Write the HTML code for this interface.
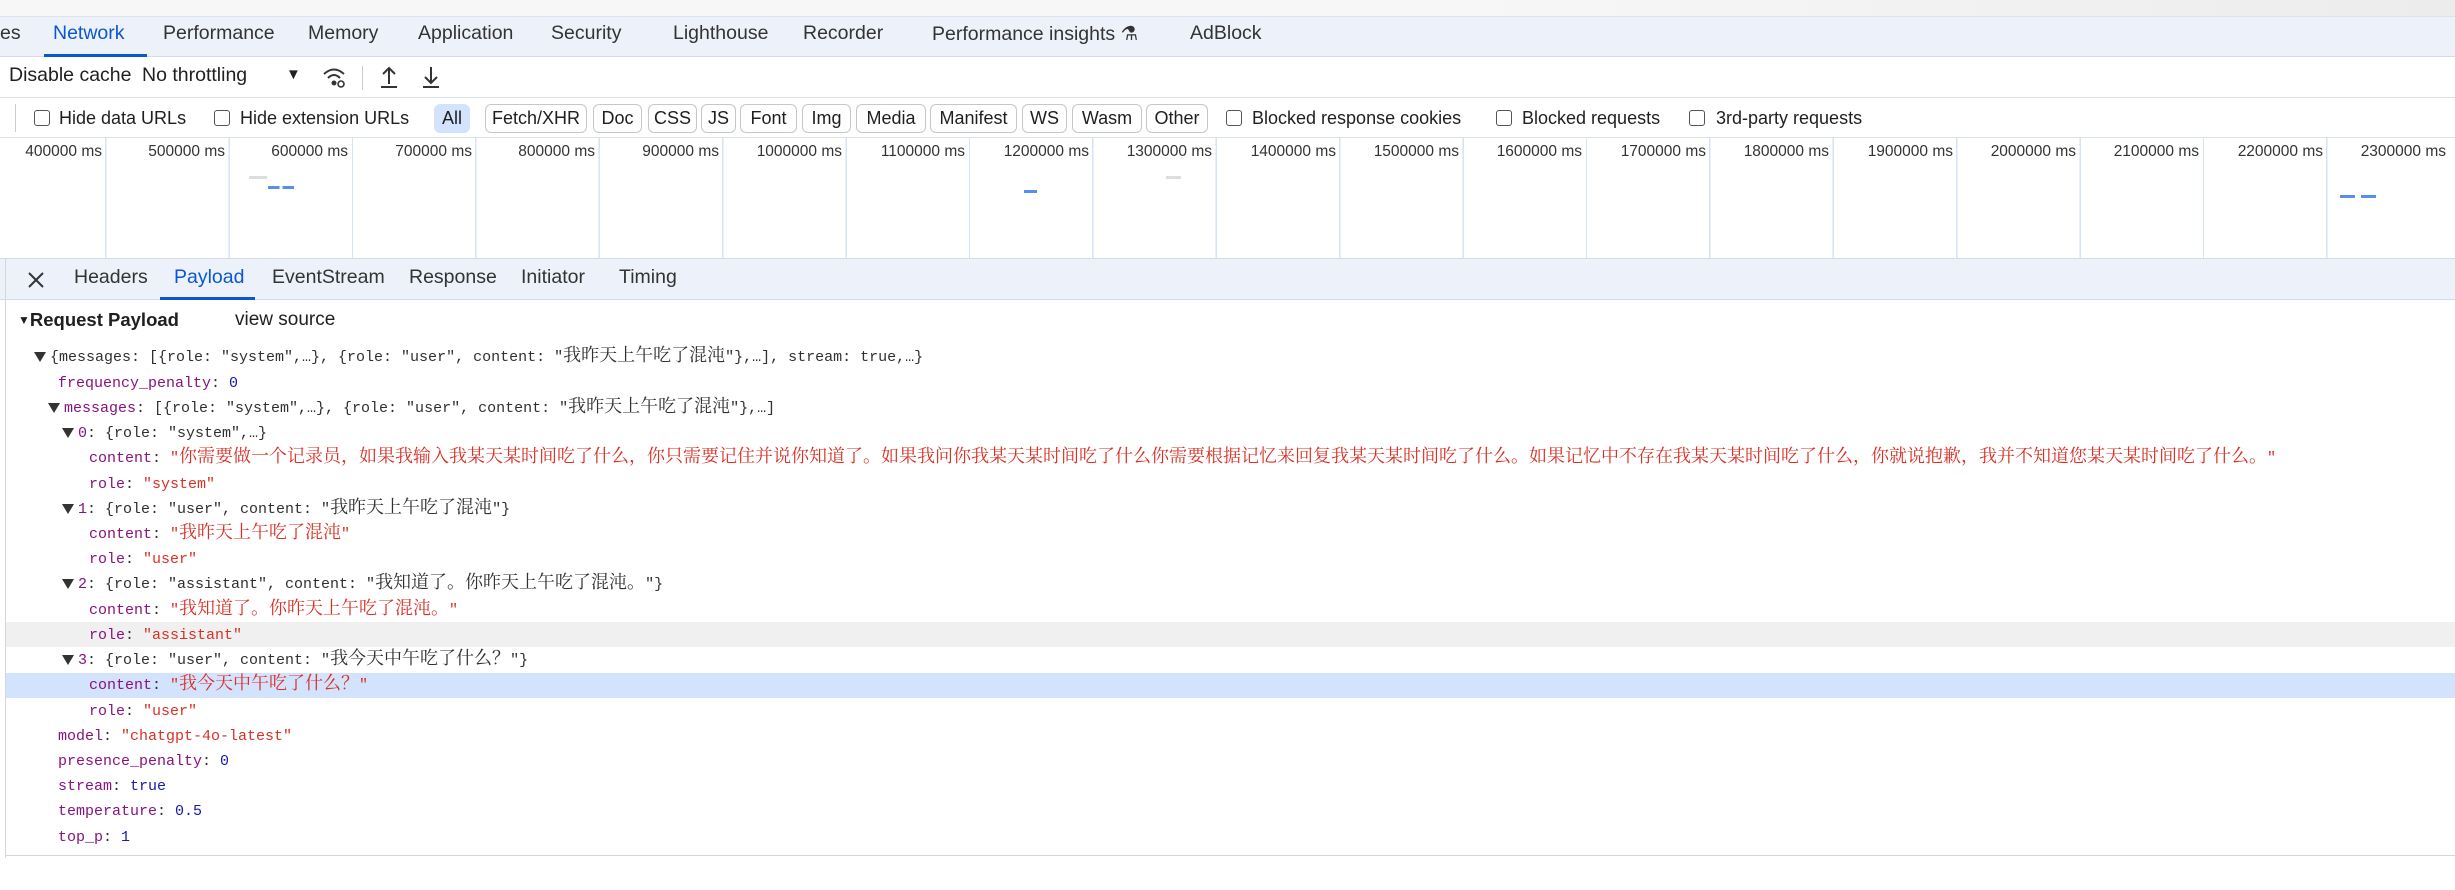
<!DOCTYPE html>
<html><head><meta charset="utf-8"><style>
*{margin:0;padding:0;box-sizing:border-box}
body{width:2455px;height:890px;overflow:hidden;background:#fff;font-family:"Liberation Sans","Noto Sans CJK SC",sans-serif;color:#1f1f1f;position:relative}
.a{position:absolute;white-space:nowrap}
.tab{position:absolute;top:22px;font-size:19.5px;color:#333}
.f{position:absolute;top:104px;font-size:18px;color:#1f1f1f;line-height:28px}
.pill{position:absolute;top:104px;height:29px;border:1px solid #c7c7c7;border-radius:6px;font-size:18px;line-height:27px;text-align:center;color:#1f1f1f}
.cb{position:absolute;top:110px;width:16px;height:16px;border:1.5px solid #555;border-radius:3px}
.tl{position:absolute;top:143px;font-size:15.5px;color:#333;text-align:right;width:115px}
.dt{position:absolute;top:266px;font-size:19.5px;color:#333}
.r{position:absolute;font-family:"Liberation Mono",monospace;font-size:15px;line-height:25px;height:25px;white-space:nowrap;color:#303030}
.r i{font-style:normal;font-family:"Noto Serif CJK SC","Noto Sans CJK SC",serif;font-size:18px;line-height:15px}
.k{color:#881280}.s{color:#d93025}.n{color:#1a1aa6}
.tri{display:inline-block;width:0;height:0;border-left:6px solid transparent;border-right:6px solid transparent;border-top:10px solid #333;margin-right:4px;vertical-align:-1px}
</style></head><body>
<div class="a" style="left:0;top:0;width:2455px;height:16px;background:linear-gradient(90deg,#f7f7f7 60%,#ececec 100%)"></div>
<div class="a" style="left:0;top:16px;width:2455px;height:41px;background:#edf2fa;border-top:1px solid #dde3ee;border-bottom:1px solid #d3dbe8"></div>
<div class="tab" style="left:0">es</div>
<div class="tab" style="left:53px;color:#0b57d0">Network</div>
<div class="a" style="left:44px;top:54px;width:103px;height:3px;background:#0b57d0"></div>
<div class="tab" style="left:163px">Performance</div>
<div class="tab" style="left:308px">Memory</div>
<div class="tab" style="left:418px">Application</div>
<div class="tab" style="left:551px">Security</div>
<div class="tab" style="left:673px">Lighthouse</div>
<div class="tab" style="left:803px">Recorder</div>
<div class="tab" style="left:932px">Performance insights ⚗</div>
<div class="tab" style="left:1190px">AdBlock</div>

<div class="a" style="left:0;top:97px;width:2455px;height:1px;background:#dde3ee"></div>
<div class="a" style="left:9px;top:64px;font-size:19.5px">Disable cache</div>
<div class="a" style="left:142px;top:64px;font-size:19.5px">No throttling</div>
<div class="a" style="left:286px;top:66px;font-size:15px">▼</div>
<svg class="a" style="left:322px;top:66px" width="26" height="24" viewBox="0 0 26 24" fill="none" stroke="#333" stroke-width="2"><path d="M2 8 Q12 -1 22 8"/><path d="M6 12 Q12 6 18 12"/><circle cx="12" cy="17" r="1.5" fill="#333"/><circle cx="19" cy="18" r="3" stroke-width="1.6"/></svg>
<div class="a" style="left:362px;top:66px;width:1px;height:24px;background:#ccc"></div>
<svg class="a" style="left:378px;top:64px" width="22" height="26" viewBox="0 0 22 26" fill="none" stroke="#333" stroke-width="2"><path d="M11 20V4M5 10l6-6 6 6M3 23h16"/></svg>
<svg class="a" style="left:420px;top:64px" width="22" height="26" viewBox="0 0 22 26" fill="none" stroke="#333" stroke-width="2"><path d="M11 3v16M5 13l6 6 6-6M3 23h16"/></svg>

<div class="a" style="left:0;top:137px;width:2455px;height:1px;background:#dde3ee"></div>
<div class="a" style="left:15px;top:104px;width:1px;height:28px;background:#ccc"></div>
<div class="cb" style="left:34px"></div><div class="f" style="left:59px">Hide data URLs</div>
<div class="cb" style="left:214px"></div><div class="f" style="left:240px">Hide extension URLs</div>
<div class="pill" style="left:434px;width:36px;background:#d3e3fd;border-color:#d3e3fd">All</div>
<div class="pill" style="left:485px;width:102px">Fetch/XHR</div>
<div class="pill" style="left:593px;width:49px">Doc</div>
<div class="pill" style="left:648px;width:49px">CSS</div>
<div class="pill" style="left:701px;width:35px">JS</div>
<div class="pill" style="left:740px;width:57px">Font</div>
<div class="pill" style="left:802px;width:49px">Img</div>
<div class="pill" style="left:856px;width:70px">Media</div>
<div class="pill" style="left:930px;width:87px">Manifest</div>
<div class="pill" style="left:1022px;width:45px">WS</div>
<div class="pill" style="left:1072px;width:70px">Wasm</div>
<div class="pill" style="left:1146px;width:62px">Other</div>
<div class="cb" style="left:1226px"></div><div class="f" style="left:1252px">Blocked response cookies</div>
<div class="cb" style="left:1496px"></div><div class="f" style="left:1522px">Blocked requests</div>
<div class="cb" style="left:1689px"></div><div class="f" style="left:1716px">3rd-party requests</div>

<div class="a" style="left:0;top:138px;width:2455px;height:120px;background:repeating-linear-gradient(90deg,transparent 0,transparent 122px,#d6e2f5 122px,#d6e2f5 123.4px);background-position:-17px 0"></div>
<div class="tl" style="left:-13px">400000 ms</div>
<div class="tl" style="left:110px">500000 ms</div>
<div class="tl" style="left:233px">600000 ms</div>
<div class="tl" style="left:357px">700000 ms</div>
<div class="tl" style="left:480px">800000 ms</div>
<div class="tl" style="left:604px">900000 ms</div>
<div class="tl" style="left:727px">1000000 ms</div>
<div class="tl" style="left:850px">1100000 ms</div>
<div class="tl" style="left:974px">1200000 ms</div>
<div class="tl" style="left:1097px">1300000 ms</div>
<div class="tl" style="left:1221px">1400000 ms</div>
<div class="tl" style="left:1344px">1500000 ms</div>
<div class="tl" style="left:1467px">1600000 ms</div>
<div class="tl" style="left:1591px">1700000 ms</div>
<div class="tl" style="left:1714px">1800000 ms</div>
<div class="tl" style="left:1838px">1900000 ms</div>
<div class="tl" style="left:1961px">2000000 ms</div>
<div class="tl" style="left:2084px">2100000 ms</div>
<div class="tl" style="left:2208px">2200000 ms</div>
<div class="tl" style="left:2331px">2300000 ms</div>
<div class="a" style="left:249px;top:176px;width:18px;height:3px;background:#ddd"></div>
<div class="a" style="left:268px;top:186px;width:26px;height:3px;background:linear-gradient(90deg,#5b8def 45%,transparent 45%,transparent 55%,#5b8def 55%)"></div>
<div class="a" style="left:1024px;top:190px;width:13px;height:3px;background:#5b8def"></div>
<div class="a" style="left:1166px;top:176px;width:15px;height:3px;background:#ddd"></div>
<div class="a" style="left:2340px;top:195px;width:36px;height:3px;background:linear-gradient(90deg,#5b8def 42%,transparent 42%,transparent 58%,#5b8def 58%)"></div>

<div class="a" style="left:0;top:258px;width:2455px;height:42px;background:#edf2fa;border-top:1px solid #d3dbe8;border-bottom:1px solid #d3dbe8"></div>
<div class="a" style="left:5px;top:258px;width:1px;height:600px;background:#d6d6d6"></div>
<svg class="a" style="left:27px;top:271px" width="18" height="18" viewBox="0 0 18 18" stroke="#333" stroke-width="2"><path d="M2 2L16 16M16 2L2 16"/></svg>
<div class="dt" style="left:74px">Headers</div>
<div class="dt" style="left:174px;color:#0b57d0">Payload</div>
<div class="a" style="left:160px;top:297px;width:95px;height:3px;background:#0b57d0"></div>
<div class="dt" style="left:272px">EventStream</div>
<div class="dt" style="left:409px">Response</div>
<div class="dt" style="left:521px">Initiator</div>
<div class="dt" style="left:619px">Timing</div>

<div class="a" style="left:18px;top:309px;font-size:18.5px;font-weight:bold;color:#1f1f1f"><span style="font-size:12px;vertical-align:2px">▼</span>Request Payload</div>
<div class="a" style="left:235px;top:309px;font-size:19px">view source</div>

<div class="a" style="left:6px;top:622px;width:2449px;height:25px;background:#f0f0f0"></div>
<div class="a" style="left:6px;top:673px;width:2449px;height:25px;background:#d3e3fd"></div>

<div class="r" style="left:34px;top:345px"><span class="tri"></span>{messages: [{role: "system",…}, {role: "user", content: "<i>我昨天上午吃了混沌</i>"},…], stream: true,…}</div>
<div class="r" style="left:58px;top:371px"><span class="k">frequency_penalty</span>: <span class="n">0</span></div>
<div class="r" style="left:48px;top:396px"><span class="tri"></span><span class="k">messages</span>: [{role: "system",…}, {role: "user", content: "<i>我昨天上午吃了混沌</i>"},…]</div>
<div class="r" style="left:62px;top:421px"><span class="tri"></span><span class="k">0</span>: {role: "system",…}</div>
<div class="r" style="left:89px;top:446px"><span class="k">content</span>: <span class="s">"<i>你需要做一个记录员，如果我输入我某天某时间吃了什么，你只需要记住并说你知道了。如果我问你我某天某时间吃了什么你需要根据记忆来回复我某天某时间吃了什么。如果记忆中不存在我某天某时间吃了什么，你就说抱歉，我并不知道您某天某时间吃了什么。</i>"</span></div>
<div class="r" style="left:89px;top:472px"><span class="k">role</span>: <span class="s">"system"</span></div>
<div class="r" style="left:62px;top:497px"><span class="tri"></span><span class="k">1</span>: {role: "user", content: "<i>我昨天上午吃了混沌</i>"}</div>
<div class="r" style="left:89px;top:522px"><span class="k">content</span>: <span class="s">"<i>我昨天上午吃了混沌</i>"</span></div>
<div class="r" style="left:89px;top:547px"><span class="k">role</span>: <span class="s">"user"</span></div>
<div class="r" style="left:62px;top:572px"><span class="tri"></span><span class="k">2</span>: {role: "assistant", content: "<i>我知道了。你昨天上午吃了混沌。</i>"}</div>
<div class="r" style="left:89px;top:598px"><span class="k">content</span>: <span class="s">"<i>我知道了。你昨天上午吃了混沌。</i>"</span></div>
<div class="r" style="left:89px;top:623px"><span class="k">role</span>: <span class="s">"assistant"</span></div>
<div class="r" style="left:62px;top:648px"><span class="tri"></span><span class="k">3</span>: {role: "user", content: "<i>我今天中午吃了什么？</i>"}</div>
<div class="r" style="left:89px;top:673px"><span class="k">content</span>: <span class="s">"<i>我今天中午吃了什么？</i>"</span></div>
<div class="r" style="left:89px;top:699px"><span class="k">role</span>: <span class="s">"user"</span></div>
<div class="r" style="left:58px;top:724px"><span class="k">model</span>: <span class="s">"chatgpt-4o-latest"</span></div>
<div class="r" style="left:58px;top:749px"><span class="k">presence_penalty</span>: <span class="n">0</span></div>
<div class="r" style="left:58px;top:774px"><span class="k">stream</span>: <span class="n">true</span></div>
<div class="r" style="left:58px;top:799px"><span class="k">temperature</span>: <span class="n">0.5</span></div>
<div class="r" style="left:58px;top:825px"><span class="k">top_p</span>: <span class="n">1</span></div>
<div class="a" style="left:6px;top:855px;width:2449px;height:1px;background:#d6d6d6"></div>
</body></html>
